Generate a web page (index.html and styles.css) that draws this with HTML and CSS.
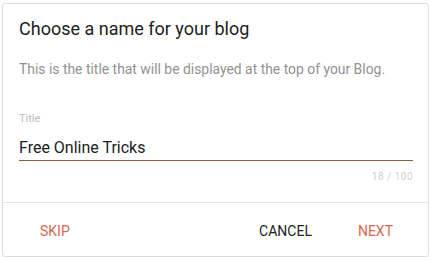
FILE: index.html
```html
<!DOCTYPE html>
<html>
    <head>
        <title>Choose a name for your blog</title>
        <link rel="stylesheet" href="styles.css">
    </head>
    <body>
        <div class="dialog">
            <div class="content">
                <div class="heading">Choose a name for your blog</div>
                <div class="hint">This is the title that will be displayed at the top of your Blog.</div>
                <div class="field">
                    <div class="label">Title</div>
                    <div class="input">Free Online Tricks</div>
                    <div class="counter">18 / 100</div>
                </div>
            </div>
            <div class="actions">
                <div class="skip button">SKIP</div>
                <div class="spacer"></div>
                <div class="cancel button">CANCEL</div>
                <div class="next button">NEXT</div>
            </div>
        </div>
    </body>
</html>
```

FILE: styles.css
```css
body {
    margin: 0;
    font-family: Roboto, "Liberation Sans", sans-serif;
    background: #fff;
}
.dialog {
    margin: 3px 3px 3px 2px;
    height: 252px;
    border: 1px solid #dcdcdc;
    border-radius: 3px;
    display: flex;
    flex-direction: column;
}
.content {
    padding: 15px 15px 0 16px;
    border-bottom: 1px solid #e4e4e4;
    height: 183px;
}
.heading {
    font-size: 18px;
    line-height: 20px;
    color: #212121;
}
.hint {
    margin-top: 22px;
    font-size: 13.9px;
    line-height: 16px;
    color: #929292;
}
.field {
    margin-top: 35px;
}
.label {
    font-size: 11px;
    line-height: 13px;
    color: #bdbdbd;
}
.input {
    margin-top: 14px;
    padding-bottom: 3px;
    font-size: 16px;
    line-height: 18px;
    color: #212121;
    border-bottom: 1px solid #9a5a48;
}
.counter {
    margin-top: 10px;
    text-align: right;
    font-size: 10px;
    line-height: 12px;
    letter-spacing: 0.5px;
    color: #d0d0d0;
}
.actions {
    flex: 1;
    display: flex;
    align-items: center;
    padding: 3px 19px 0 21px;
}
.spacer {
    flex: 1;
}
.button {
    padding: 0 16px;
    font-size: 14px;
    line-height: 16px;
    cursor: pointer;
    user-select: none;
}
.skip, .next {
    color: #d6694f;
}
.cancel {
    color: #222;
    margin-right: 14px;
}
```
